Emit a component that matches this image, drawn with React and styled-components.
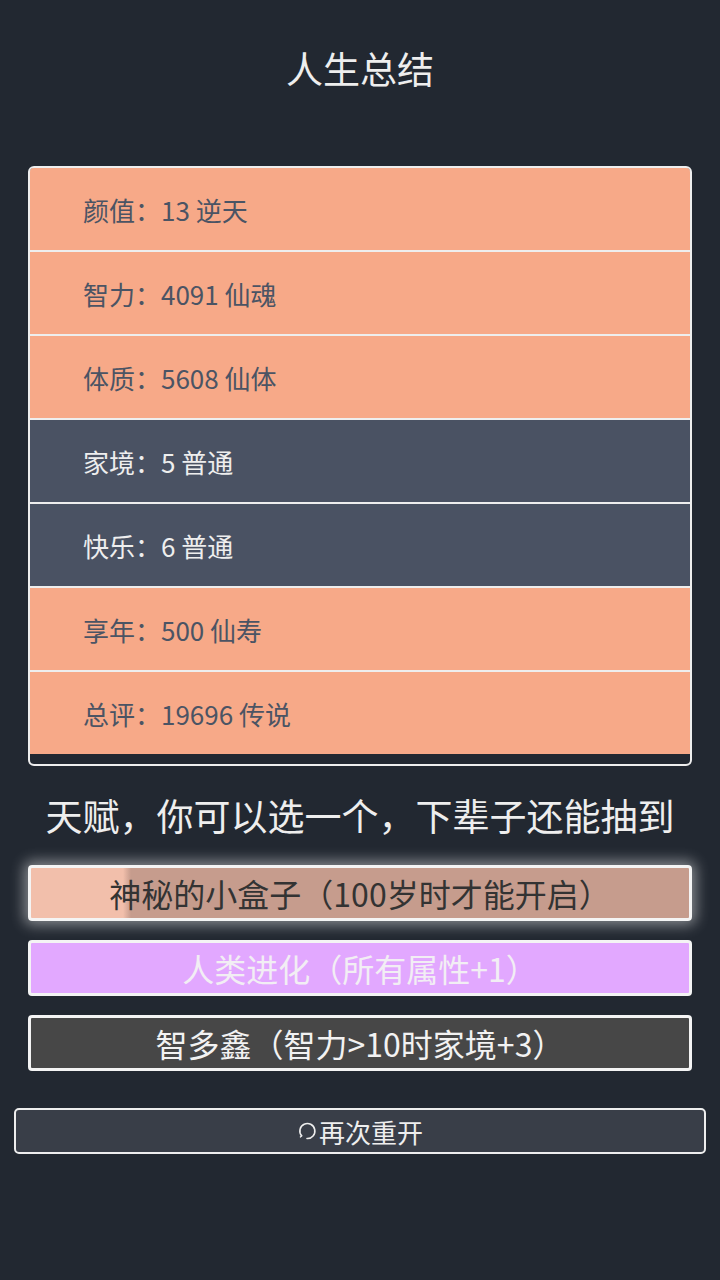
import React from 'react'
import styled, { createGlobalStyle } from 'styled-components'

const GlobalStyle = createGlobalStyle`
body {
  margin: 0;
  background: #222831;
  font-family: "Noto Sans CJK SC", "Noto Sans", sans-serif;
}
`

const Page = styled.div`
min-height: 1280px;
background: #222831;
display: flex;
flex-direction: column;
`

const Title = styled.h1`
margin: 47px 0 76px;
font-size: 37px;
font-weight: 400;
line-height: 43px;
color: #eeeeee;
text-align: center;
`

const Summary = styled.div`
margin: 0 28px;
border: 2px solid #eeeeee;
border-radius: 6px;
overflow: hidden;
padding-bottom: 10px;
display: flex;
flex-direction: column;
gap: 2px;
background: #222831;
`

const Row = styled.div`
height: 82px;
display: flex;
align-items: center;
padding-left: 53px;
font-size: 26px;
background: ${props => props.type === "dark" ? "#4a5263" : "#f7a988"};
color: ${props => props.type === "dark" ? "#eeeeee" : "#4b5464"};
box-shadow: 0 -2px 0 #eeeeee;
`

const Prompt = styled.div`
margin: 27px 0 28px;
font-size: 37px;
line-height: 44px;
color: #eeeeee;
text-align: center;
`

const Talents = styled.div`
margin: 0 28px;
display: flex;
flex-direction: column;
gap: 19px;
`

const Talent = styled.div`
height: 50px;
border: 3px solid #f4f4f4;
border-radius: 4px;
display: flex;
align-items: center;
justify-content: center;
font-size: 32px;
line-height: 1;
background: ${props => props.bg};
color: ${props => props.fg};
box-shadow: ${props => props.glow ? "0 0 14px 4px rgba(255,255,255,0.45)" : "none"};
`

const Restart = styled.button`
margin: 37px 14px 0;
height: 46px;
border: 2px solid #eeeeee;
border-radius: 5px;
background: #393e48;
color: #eeeeee;
font-family: inherit;
font-size: 26px;
display: flex;
align-items: center;
justify-content: center;
gap: 2px;
padding: 0;
`

const rows = [
  ["颜值：13 逆天"],
  ["智力：4091 仙魂"],
  ["体质：5608 仙体"],
  ["家境：5 普通", "dark"],
  ["快乐：6 普通", "dark"],
  ["享年：500 仙寿"],
  ["总评：19696 传说"],
]

const RestartIcon = () => (
  <svg width="20" height="22" viewBox="0 0 20 22" fill="none">
    <path d="M4.6 15.8 A7.5 7.5 0 1 1 10 18.5" stroke="#eeeeee" strokeWidth="1.6" strokeLinecap="round" />
    <path d="M4.6 15.8 L3.4 16.9" stroke="#eeeeee" strokeWidth="1.4" strokeLinecap="round" />
  </svg>
)

const App = () => {
  return (
    <Page>
      <GlobalStyle />
      <Title>人生总结</Title>
      <Summary>
        {rows.map(([text, type]) => (
          <Row key={text} type={type}>{text}</Row>
        ))}
      </Summary>
      <Prompt>天赋，你可以选一个，下辈子还能抽到</Prompt>
      <Talents>
        <Talent
          glow
          bg="linear-gradient(90deg, #f2bfab 0px, #f2bfab 92px, #c69c8d 100px, #c69c8d 100%)"
          fg="#333333"
        >
          神秘的小盒子（100岁时才能开启）
        </Talent>
        <Talent bg="#e2a8ff" fg="#f2eef4">人类进化（所有属性+1）</Talent>
        <Talent bg="#474747" fg="#f2f2f2">智多鑫（智力&gt;10时家境+3）</Talent>
      </Talents>
      <Restart>
        <RestartIcon />
        再次重开
      </Restart>
    </Page>
  )
}

export default App
